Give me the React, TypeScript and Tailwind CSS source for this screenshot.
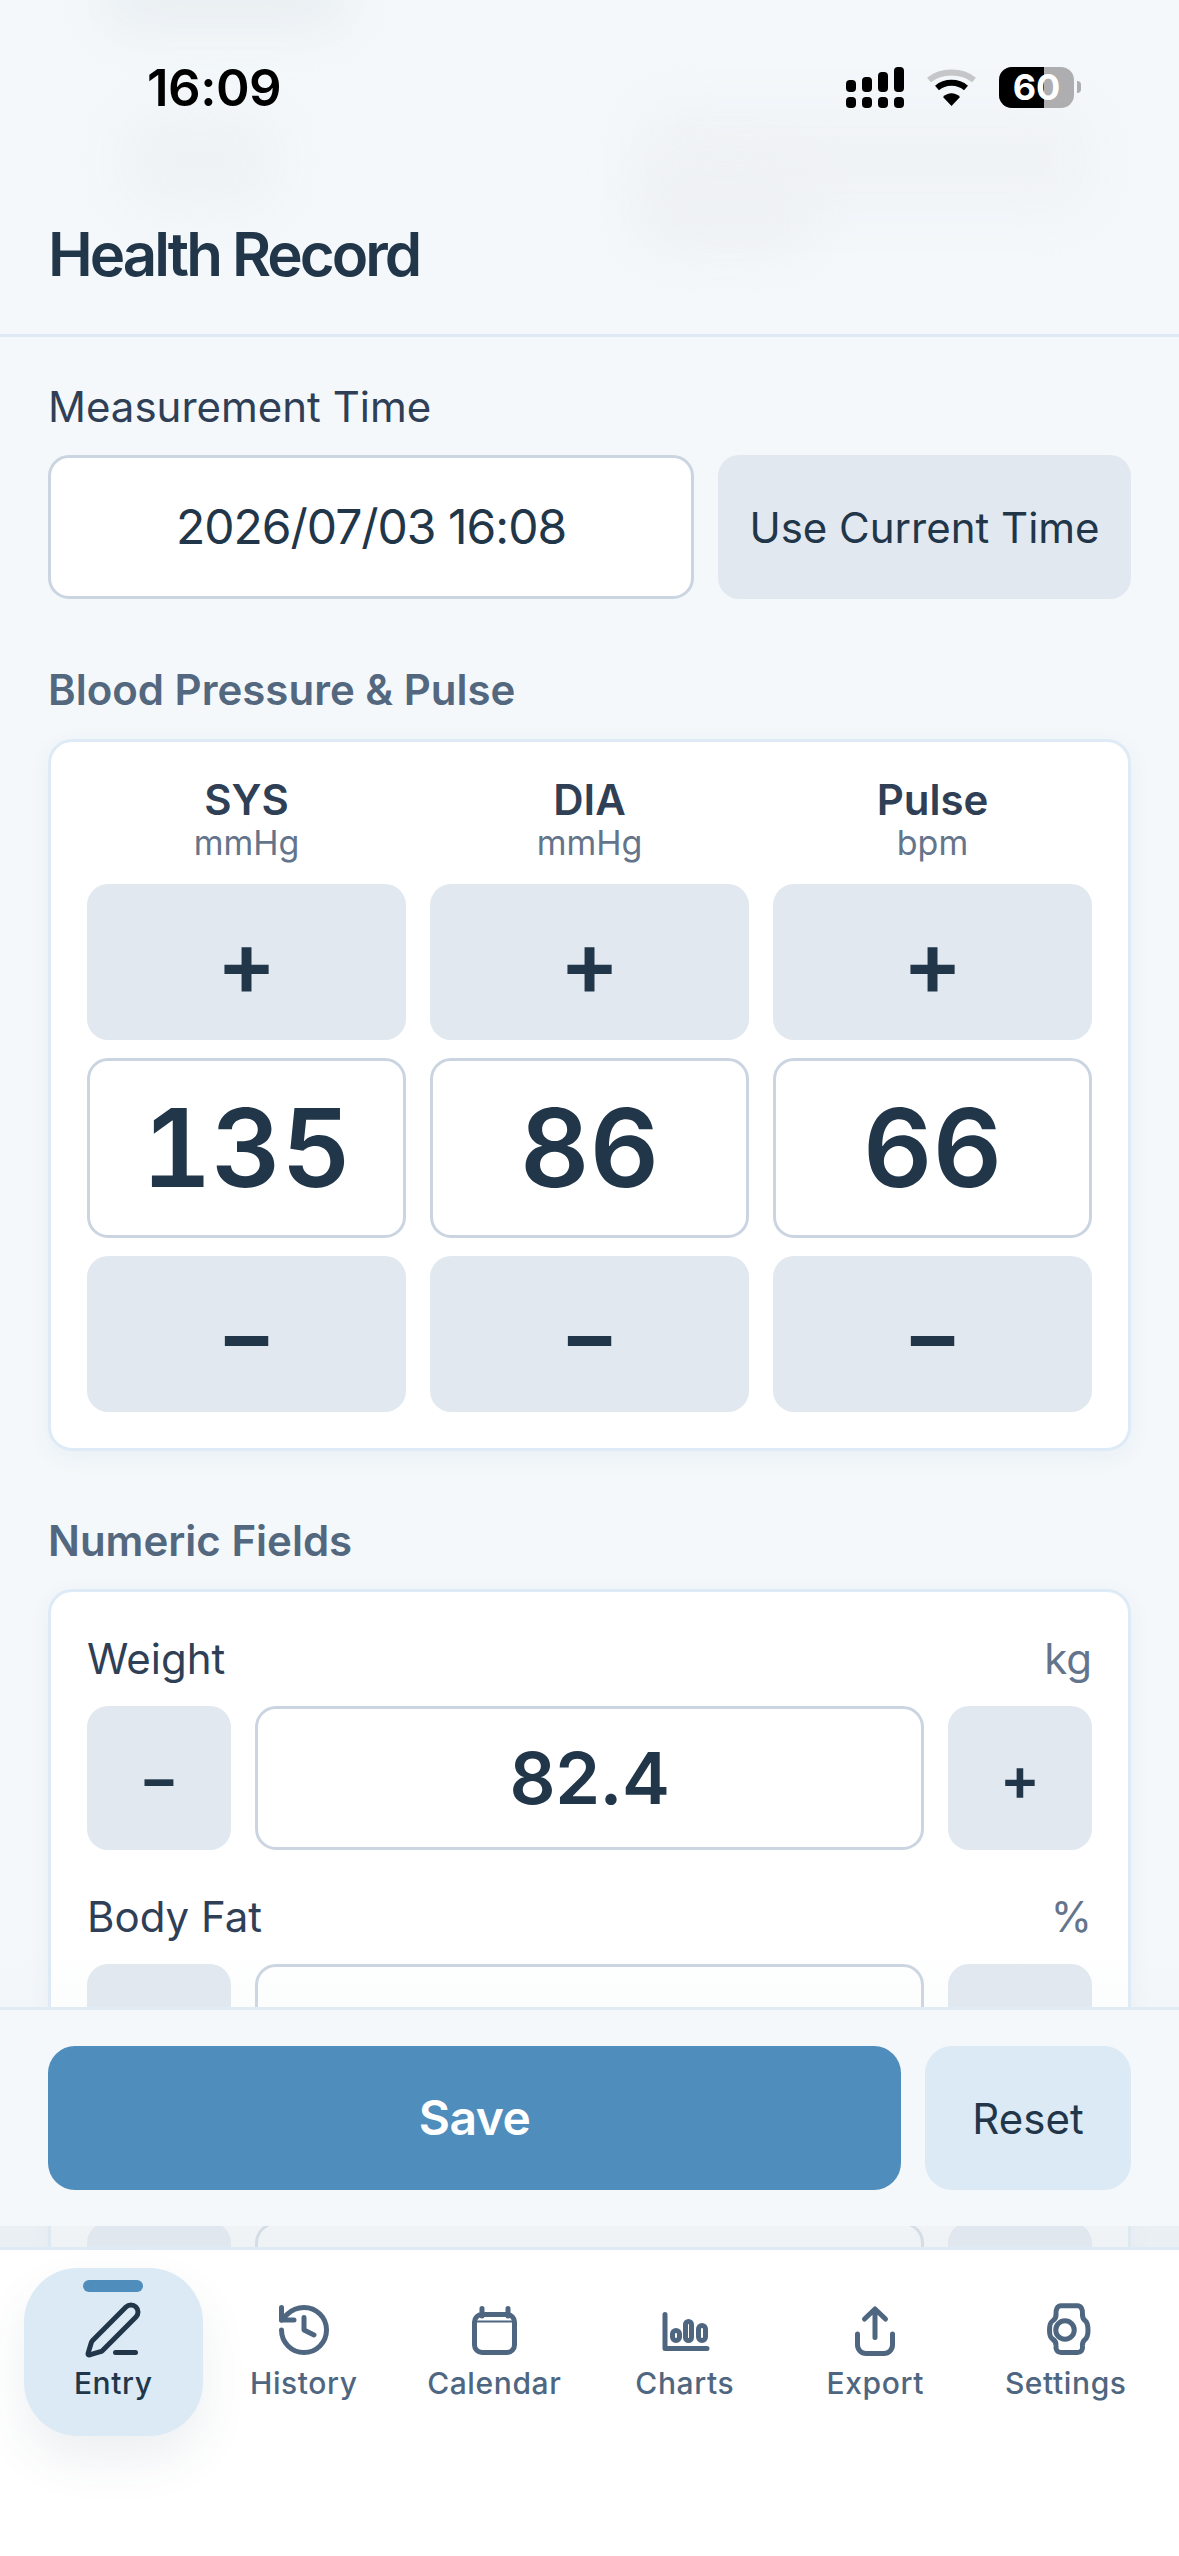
import { History, PenLine } from "lucide-react";
import type { ReactNode } from "react";

const vitals = [
  { name: "SYS", unit: "mmHg", value: "135" },
  { name: "DIA", unit: "mmHg", value: "86" },
  { name: "Pulse", unit: "bpm", value: "66" },
];

const fields = [
  { name: "Weight", unit: "kg", value: "82.4" },
  { name: "Body Fat", unit: "%", value: "" },
  { name: "Muscle", unit: "kg", value: "" },
];

function Glyph({ children }: { children: ReactNode }) {
  return (
    <svg
      viewBox="0 0 24 24"
      fill="none"
      stroke="currentColor"
      strokeWidth={2}
      strokeLinecap="round"
      strokeLinejoin="round"
      className="h-[60px] w-[60px]"
    >
      {children}
    </svg>
  );
}

function CalendarGlyph() {
  return (
    <Glyph>
      <rect x="4.2" y="5.8" width="16" height="15.2" rx="3" />
      <path d="M7.2 3.400v3M17.600 3.400v3" />
      <path d="M5 8.600h14.400" strokeWidth={0.8} />
    </Glyph>
  );
}

function ChartGlyph() {
  return (
    <Glyph>
      <path d="M4 5.800V19.400H20.800" />
      <rect x="7" y="12.2" width="2.8" height="4" rx="1.4" />
      <rect x="12.2" y="8.6" width="2.4" height="7.6" rx="1.2" />
      <rect x="17.4" y="10.2" width="2.8" height="6" rx="1.4" />
    </Glyph>
  );
}

function ExportGlyph() {
  return (
    <Glyph>
      <path d="M12 3.600V15M7.800 7.600 12 3.600l4.200 4" />
      <path d="M5 13.600V18a3.400 3.400 0 0 0 3.400 3.400h7.200A3.400 3.400 0 0 0 19 18v-4.400" />
    </Glyph>
  );
}

function SettingsGlyph() {
  return (
    <Glyph>
      <path d="M10 2.300H16.600C18 2.300 18.800 3.800 18.600 5.600 18.500 6.800 18.800 7.600 19.600 8.200 21.200 9.400 21.200 14.600 19.600 15.800 18.800 16.400 18.500 17.200 18.600 18.400 18.800 20 18 21 16.600 21H10C8.600 21 7.800 20 8 18.400 8.100 17.200 7.600 16.200 6.600 15.600 5 14.600 5 9.400 6.600 8.400 7.600 7.800 8.100 6.800 8 5.600 7.800 3.800 8.600 2.300 10 2.300Z" />
      <circle cx="11.6" cy="12" r="3.7" />
    </Glyph>
  );
}

const tabs = [
  { label: "Entry", icon: <PenLine size={60} strokeWidth={2} />, active: true },
  { label: "History", icon: <History size={60} strokeWidth={2} />, active: false },
  { label: "Calendar", icon: <CalendarGlyph />, active: false },
  { label: "Charts", icon: <ChartGlyph />, active: false },
  { label: "Export", icon: <ExportGlyph />, active: false },
  { label: "Settings", icon: <SettingsGlyph />, active: false },
];

function StatusBar() {
  return (
    <div className="flex h-[42px] items-center justify-between pl-[147px] pr-[98px] text-black">
      <span className="text-[51px] leading-none font-semibold tracking-[-0.5px]">16:09</span>
      <div className="flex items-center">
        <svg viewBox="0 0 58 41" className="h-[41px] w-[58px]" fill="currentColor">
          <rect x="0" y="13" width="10" height="12" rx="4" />
          <rect x="16" y="10" width="10" height="15" rx="4" />
          <rect x="32" y="5" width="10" height="20" rx="4" />
          <rect x="48" y="0" width="10" height="25" rx="4" />
          <rect x="0" y="30" width="10" height="11" rx="4" />
          <rect x="16" y="30" width="10" height="11" rx="4" />
          <rect x="32" y="30" width="10" height="11" rx="4" />
          <rect x="48" y="30" width="10" height="11" rx="4" />
        </svg>
        <svg viewBox="0 0 51 37" className="ml-[22px] h-[37px] w-[51px]" fill="none">
          <path d="M3 11C15 1 36 1 48 11" stroke="#c4c6c7" strokeWidth="6" />
          <path d="M11 19C19 12 32 12 40 19" stroke="#000" strokeWidth="6" />
          <path d="M17 28 25.500 37 34 28C29 23 22 23 17 28Z" fill="#000" />
        </svg>
        <div className="relative ml-[22px] h-[41px] w-[75px] overflow-hidden rounded-[13px] bg-[#aeaeb0]">
          <div className="h-full w-[45px] bg-black" />
          <span className="absolute inset-0 flex items-center justify-center text-[36px] leading-none font-bold text-white">
            60
          </span>
        </div>
        <div className="ml-[3px] h-[12px] w-[4px] rounded-r-full bg-[#aeaeb0]" />
      </div>
    </div>
  );
}

function Header() {
  return (
    <header className="relative h-[337px] overflow-hidden border-b-[3px] border-[#deebf6] pt-[66px]">
      <div className="absolute left-[100px] top-[-30px] h-[60px] w-[250px] rounded-full bg-[#e9eef2] blur-xl" />
      <div className="absolute left-[120px] top-[110px] h-[100px] w-[160px] rounded-[40px] bg-[#eef2f5] blur-xl" />
      <div className="absolute left-[640px] top-[105px] h-[110px] w-[450px] rounded-[30px] bg-[#f0f3f6] blur-xl" />
      <div className="absolute left-[640px] top-[165px] h-[85px] w-[170px] rounded-[30px] bg-[#eef1f4] blur-xl" />
      <div className="relative">
        <StatusBar />
        <h1 className="mt-[110px] pl-[48px] text-[60px] leading-[72px] font-semibold tracking-[-3px] text-[#22364a]">
          Health Record
        </h1>
      </div>
    </header>
  );
}

function VitalsCard() {
  return (
    <div className="mt-[19px] rounded-[24px] border-[3px] border-[#deebf6] bg-white p-[36px] shadow-[0_6px_24px_rgba(40,80,120,0.05)]">
      <div className="grid grid-cols-3 gap-x-[24px]">
        {vitals.map((v) => (
          <div key={v.name} className="flex flex-col">
            <div className="text-center text-[42px] leading-[44px] font-semibold text-[#2f4056]">{v.name}</div>
            <div className="mb-[20px] text-center text-[34px] leading-[42px] text-[#64748b]">{v.unit}</div>
            <button className="flex h-[156px] items-center justify-center rounded-[21px] bg-[#e2e8f0] text-[90px] font-semibold text-[#22364a]">
              +
            </button>
            <div className="my-[18px] flex h-[180px] items-center justify-center rounded-[21px] border-[3px] border-[#cbd5e1] bg-white text-[108px] font-semibold text-[#22364a] tabular-nums">
              {v.value}
            </div>
            <button className="flex h-[156px] items-center justify-center rounded-[21px] bg-[#e2e8f0] text-[90px] font-semibold text-[#22364a]">
              −
            </button>
          </div>
        ))}
      </div>
    </div>
  );
}

function FieldsCard() {
  return (
    <div className="mt-[18px] rounded-[24px] border-[3px] border-[#deebf6] bg-white p-[36px] shadow-[0_6px_24px_rgba(40,80,120,0.05)]">
      <div className="flex flex-col gap-[36px]">
        {fields.map((f) => (
          <div key={f.name}>
            <div className="mb-[18px] flex h-[60px] items-center justify-between">
              <span className="text-[42px] font-normal text-[#2f4056]">{f.name}</span>
              <span className="text-[42px] text-[#64748b]">{f.unit}</span>
            </div>
            <div className="flex gap-[24px]">
              <button className="flex h-[144px] w-[144px] items-center justify-center rounded-[21px] bg-[#e2e8f0] text-[60px] font-semibold text-[#22364a]">
                −
              </button>
              <div className="flex h-[144px] flex-1 items-center justify-center rounded-[21px] border-[3px] border-[#cbd5e1] bg-white text-[72px] font-semibold tracking-[-0.5px] text-[#22364a]">
                {f.value}
              </div>
              <button className="flex h-[144px] w-[144px] items-center justify-center rounded-[21px] bg-[#e2e8f0] text-[60px] font-semibold text-[#22364a]">
                +
              </button>
            </div>
          </div>
        ))}
      </div>
    </div>
  );
}

function ActionBar() {
  return (
    <div className="absolute inset-x-0 bottom-[330px] flex gap-[24px] border-t-[3px] border-[#e0ebf4] bg-[#f4f8fb] px-[48px] py-[36px]">
      <button className="h-[144px] flex-1 rounded-[27px] bg-[#4f8dbd] text-[48px] font-semibold tracking-[-0.5px] text-white">
        Save
      </button>
      <button className="h-[144px] w-[206px] rounded-[27px] bg-[#dceaf6] text-[42px] font-normal text-[#22364a]">
        Reset
      </button>
    </div>
  );
}

function TabBar() {
  return (
    <nav className="absolute inset-x-0 bottom-0 grid h-[309px] grid-cols-6 gap-[12px] border-t-[3px] border-[#deebf6] bg-white px-[24px] pt-[18px]">
      {tabs.map((t) => (
        <div
          key={t.label}
          className={
            t.active
              ? "relative flex h-[168px] flex-col items-center rounded-[54px] bg-[#dceaf6] pt-[32px] text-[#22364a] shadow-[0_24px_48px_rgba(60,80,100,0.09)]"
              : "relative flex h-[168px] flex-col items-center pt-[32px] text-[#4f6680]"
          }
        >
          {t.active && <span className="absolute left-[59px] top-[12px] h-[12px] w-[60px] rounded-full bg-[#4f8dbd]" />}
          {t.icon}
          <span className="mt-[3px] text-[30px] leading-[40px] font-medium tracking-[0.6px]">{t.label}</span>
        </div>
      ))}
    </nav>
  );
}

export default function App() {
  return (
    <div className="relative h-[2556px] w-[1179px] overflow-hidden bg-[#f4f8fb] font-[Inter,'Noto_Sans',sans-serif]">
      <Header />
      <main className="px-[48px] pt-[40px]">
        <div className="text-[42px] leading-[60px] font-normal text-[#2f4056]">Measurement Time</div>
        <div className="mt-[18px] flex gap-[24px]">
          <div className="flex h-[144px] flex-1 items-center justify-center rounded-[21px] border-[3px] border-[#cbd5e1] bg-white text-[48px] tracking-[-1px] text-[#22364a]">
            2026/07/03 16:08
          </div>
          <button className="h-[144px] w-[413px] rounded-[21px] bg-[#e2e8f0] text-[42px] font-normal text-[#22364a]">
            Use Current Time
          </button>
        </div>

        <div className="mt-[61px] text-[42px] leading-[60px] font-semibold text-[#53687f]">Blood Pressure &amp; Pulse</div>
        <VitalsCard />

        <div className="mt-[60px] text-[42px] leading-[60px] font-semibold text-[#53687f]">Numeric Fields</div>
        <FieldsCard />
      </main>

      <div className="absolute inset-x-0 bottom-[309px] h-[300px] bg-gradient-to-b from-transparent to-[#dfe6ec]/50" />
      <ActionBar />
      <TabBar />
    </div>
  );
}
